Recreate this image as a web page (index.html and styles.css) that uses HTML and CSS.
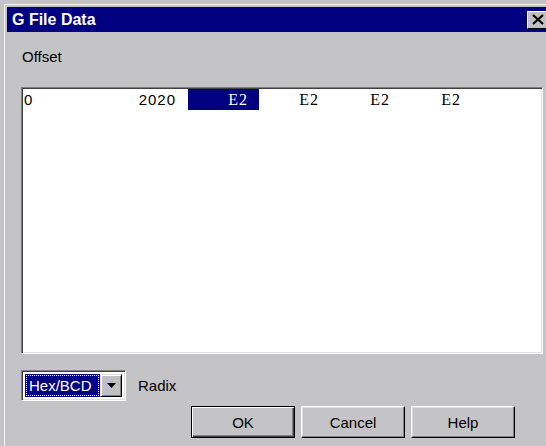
FILE: index.html
```html
<!DOCTYPE html>
<html>
<head>
<meta charset="utf-8">
<title>G File Data</title>
<link rel="stylesheet" href="styles.css">
</head>
<body>
<div class="window">
  <div class="titlebar">
    <span class="title">G File Data</span>
    <span class="close">
      <svg width="12" height="11" viewBox="0 0 12 11"><path d="M1 1 L11 10 M11 1 L1 10" stroke="#000" stroke-width="2.2" fill="none"/></svg>
    </span>
  </div>
  <div class="content">
    <div class="label">Offset</div>
    <div class="listbox">
      <div class="row">
        <span class="c-off">0</span>
        <span class="c-addr">2020</span>
        <span class="cell sel">E2</span>
        <span class="cell">E2</span>
        <span class="cell">E2</span>
        <span class="cell">E2</span>
      </div>
    </div>
    <div class="radix-row">
      <div class="combo">
        <span class="combo-value"><span class="focus">Hex/BCD</span></span>
        <span class="combo-btn">
          <svg width="9" height="5" viewBox="0 0 9 5"><path d="M0 0 H9 L4.5 5 Z" fill="#000"/></svg>
        </span>
      </div>
      <span class="radix-label">Radix</span>
    </div>
    <div class="buttons">
      <button class="btn default">OK</button>
      <button class="btn">Cancel</button>
      <button class="btn">Help</button>
    </div>
  </div>
</div>
</body>
</html>
```
FILE: styles.css
```css
html, body {
  margin: 0;
  padding: 0;
  width: 546px;
  height: 446px;
  overflow: hidden;
  background: #c4c3c6;
}

body {
  padding: 4px 0 0 4px;
  box-sizing: border-box;
}

.window {
  width: 562px;
  height: 446px;
  box-sizing: border-box;
  background: #c4c3c6;
  border-top: 1px solid #f4f4f4;
  border-left: 1px solid #f4f4f4;
  padding: 2px 0 0 2px;
  font-family: "Liberation Sans", Arial, sans-serif;
  color: #000;
}

.titlebar {
  height: 25px;
  background: #000080;
  display: flex;
  align-items: center;
  padding-left: 5px;
}

.title {
  color: #fff;
  font-weight: bold;
  font-size: 16px;
  flex: 1;
}

.close {
  width: 21px;
  height: 18px;
  margin-right: 18px;
  box-sizing: border-box;
  background: #c0c0c0;
  border-top: 1px solid #fff;
  border-left: 1px solid #fff;
  border-right: 1px solid #000;
  border-bottom: 1px solid #000;
  display: flex;
  align-items: center;
  justify-content: center;
}

.content {
  padding: 16px 0 0 14px;
}

.label {
  font-size: 15px;
  line-height: 18px;
  padding-left: 1px;
}

.listbox {
  margin-top: 21px;
  width: 522px;
  height: 267px;
  box-sizing: border-box;
  background: #fff;
  border-top: 1px solid #808080;
  border-left: 1px solid #808080;
  border-right: 1px solid #fff;
  border-bottom: 1px solid #fff;
  box-shadow: inset 1px 1px 0 #404040, inset -1px -1px 0 #dfdfdf;
  padding: 1px 0 0 2px;
}

.row {
  display: flex;
  height: 21px;
  align-items: center;
}

.c-off {
  width: 20px;
  font-size: 15px;
}

.c-addr {
  width: 144px;
  box-sizing: border-box;
  padding-right: 12px;
  text-align: right;
  font-size: 15px;
  letter-spacing: 1px;
}

.cell {
  width: 71px;
  height: 21px;
  line-height: 21px;
  box-sizing: border-box;
  padding-right: 11px;
  text-align: right;
  font-family: "Liberation Serif", "Times New Roman", serif;
  font-size: 16px;
  letter-spacing: 1px;
}

.cell.sel {
  background: #000080;
  color: #fff;
}

.radix-row {
  display: flex;
  align-items: center;
  margin-top: 16px;
  gap: 12px;
}

.combo {
  width: 105px;
  height: 31px;
  box-sizing: border-box;
  border-top: 1px solid #808080;
  border-left: 1px solid #808080;
  border-right: 1px solid #fff;
  border-bottom: 1px solid #fff;
  box-shadow: inset 1px 1px 0 #404040, inset -1px -1px 0 #dfdfdf;
  padding: 3px;
  display: flex;
  background: #fff;
}

.combo-value {
  flex: 1;
  background: #000080;
  display: flex;
  align-items: center;
  padding: 1px;
}

.focus {
  flex: 1;
  height: 100%;
  box-sizing: border-box;
  border: 1px dotted #ffff80;
  color: #fff;
  font-size: 15px;
  line-height: 19px;
  padding-left: 2px;
}

.combo-btn {
  width: 22px;
  box-sizing: border-box;
  background: #c0c0c0;
  border-top: 1px solid #dfdfdf;
  border-left: 1px solid #dfdfdf;
  border-right: 1px solid #000;
  border-bottom: 1px solid #000;
  box-shadow: inset 1px 1px 0 #fff, inset -1px -1px 0 #808080;
  display: flex;
  align-items: center;
  justify-content: center;
}

.radix-label {
  font-size: 15px;
}

.buttons {
  display: flex;
  gap: 6px;
  margin-top: 5px;
  padding-left: 170px;
}

.btn {
  width: 104px;
  height: 32px;
  box-sizing: border-box;
  background: #c4c3c6;
  font-family: "Liberation Sans", Arial, sans-serif;
  font-size: 15px;
  color: #000;
  border-top: 1px solid #fff;
  border-left: 1px solid #fff;
  border-right: 1px solid #000;
  border-bottom: 1px solid #000;
  box-shadow: inset -1px -1px 0 #808080, inset 1px 1px 0 #dfdfdf;
  padding: 0;
}

.btn.default {
  border: 1px solid #000;
  box-shadow: inset 1px 1px 0 #fff, inset -1px -1px 0 #404040, inset -2px -2px 0 #808080;
}
```
